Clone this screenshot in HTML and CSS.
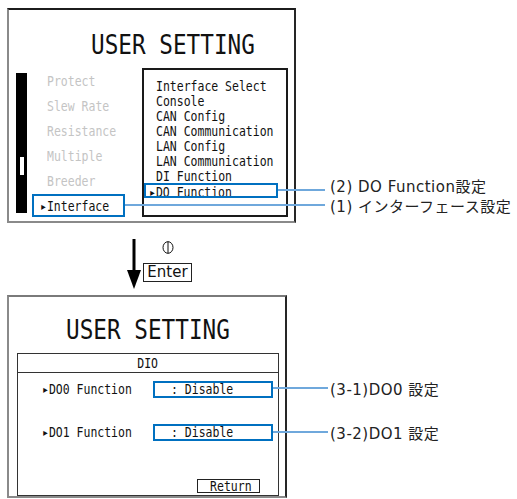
FILE: index.html
```html
<!DOCTYPE html>
<html lang="ja">
<head>
    <meta charset="UTF-8">
    <title>USER SETTING - DIO</title>
    <link rel="stylesheet" href="styles.css">
</head>
<body>
    <div class="sheet">
        <!-- step 1: interface menu -->
        <section class="screen screen-menu">
            <h1 class="title"><span class="big">USER SETTING</span></h1>
            <div class="menu-body">
                <div class="scrollbar"><div class="thumb"></div></div>
                <ul class="menu">
                    <li><span class="t">Protect</span></li>
                    <li><span class="t">Slew Rate</span></li>
                    <li><span class="t">Resistance</span></li>
                    <li><span class="t">Multiple</span></li>
                    <li><span class="t">Breeder</span></li>
                    <li class="sel"><span class="t mark">▸Interface</span></li>
                </ul>
                <ul class="submenu">
                    <li><span class="t">Interface Select</span></li>
                    <li><span class="t">Console</span></li>
                    <li><span class="t">CAN Config</span></li>
                    <li><span class="t">CAN Communication</span></li>
                    <li><span class="t">LAN Config</span></li>
                    <li><span class="t">LAN Communication</span></li>
                    <li><span class="t">DI Function</span></li>
                    <li class="sel"><span class="t mark">▸DO Function</span></li>
                </ul>
            </div>
        </section>

        <!-- step arrow -->
        <div class="step">
            <svg class="arrow" width="14" height="50" viewBox="0 0 14 50">
                <rect x="5.5" y="0" width="3" height="33" fill="#000"/>
                <polygon points="0,31 14,31 7,50" fill="#000"/>
            </svg>
            <div class="enter">
                <svg class="num" width="12" height="13" viewBox="0 0 12 13">
                    <ellipse cx="6" cy="6.5" rx="5" ry="5.8" fill="none" stroke="#111" stroke-width="1"/>
                    <line x1="6" y1="0.7" x2="6" y2="12.3" stroke="#111" stroke-width="1"/>
                </svg>
                <div class="key">Enter</div>
            </div>
        </div>

        <!-- step 2: DIO settings -->
        <section class="screen screen-dio">
            <h1 class="title"><span class="big">USER SETTING</span></h1>
            <div class="dio">
                <div class="dio-head"><span class="t center">DIO</span></div>
                <div class="dio-row first">
                    <div class="label"><span class="t">▸DO0 Function</span></div>
                    <div class="value"><span class="t">: Disable</span></div>
                </div>
                <div class="dio-row">
                    <div class="label"><span class="t">▸DO1 Function</span></div>
                    <div class="value"><span class="t">: Disable</span></div>
                </div>
                <div class="return"><span class="t right">Return</span></div>
            </div>
        </section>

        <!-- callouts -->
        <div class="callout c2"><div class="lead" style="width:47px"></div><span class="note up">(2) DO Function設定</span></div>
        <div class="callout c1"><div class="lead" style="width:200px"></div><span class="note">(1) インターフェース設定</span></div>
        <div class="callout c31"><div class="lead" style="width:55px"></div><span class="note">(3-1)DO0 設定</span></div>
        <div class="callout c32"><div class="lead" style="width:55px"></div><span class="note">(3-2)DO1 設定</span></div>
    </div>
</body>
</html>
```

FILE: styles.css
```css
body {
    margin: 0;
    background-color: #fff;
}
.sheet {
    position: relative;
    height: 499px;
    padding: 8px 0 0 7px;
    box-sizing: border-box;
    font-family: "DejaVu Sans Mono", monospace;
    color: #111;
    overflow: hidden;
}

/* narrow lcd text */
.t, .big {
    display: inline-block;
    white-space: pre;
    transform: scaleX(.82);
    transform-origin: 0 50%;
}
.big {
    transform: scaleX(.84);
}
.t.center {
    transform-origin: 50% 50%;
}
.t.right {
    transform-origin: 100% 50%;
}
.t.mark {
    margin-left: -7px;
}

.screen {
    border: 2px solid;
    border-color: #1c1c1c #262626 #8a8a8a #8a8a8a;
    box-sizing: border-box;
}
.screen-menu {
    width: 289px;
    height: 215px;
}
.screen-dio {
    width: 280px;
    height: 203px;
    border-top-color: #7a7a7a;
}
.title {
    margin: 20px 0 0;
    padding-left: 81.7px;
    font-size: 27px;
    line-height: 30px;
    font-weight: normal;
}
.screen-dio .title {
    margin-top: 18.3px;
    padding-left: 57px;
}

/* menu screen */
.menu-body {
    display: flex;
    align-items: flex-start;
}
.scrollbar {
    width: 11px;
    height: 140px;
    margin: 13px 0 0 7px;
    padding: 84px 0 0 4px;
    box-sizing: border-box;
    background-color: #000;
}
.thumb {
    width: 4px;
    height: 18px;
    background-color: #fff;
}
.menu {
    list-style: none;
    margin: 9px 0 0 5px;
    padding: 0;
    width: 93px;
    font-size: 14px;
    color: #c4c4c4;
}
.menu li {
    height: 25px;
    line-height: 25px;
    padding-left: 14.7px;
}
.menu .sel {
    position: relative;
    color: #111;
}
.menu .sel::after {
    content: "";
    position: absolute;
    left: 0;
    top: 0;
    width: 93px;
    height: 23px;
    border: 2px solid #0070c0;
    box-sizing: border-box;
}
.submenu {
    list-style: none;
    margin: 8px 0 0 17px;
    padding: 8.5px 0 0;
    width: 146px;
    height: 149px;
    box-sizing: border-box;
    border: 2px solid #1a1a1a;
    font-size: 14px;
}
.submenu li {
    height: 15px;
    line-height: 15px;
    padding-left: 12px;
}
.submenu .sel {
    position: relative;
    margin-top: 1.5px;
}
.submenu .sel::after {
    content: "";
    position: absolute;
    left: 0;
    top: -2px;
    width: 134px;
    height: 15px;
    border: 2px solid #0070c0;
    box-sizing: border-box;
}

/* arrow + enter key */
.step {
    display: flex;
    height: 72px;
    padding-left: 120px;
}
.arrow {
    margin-top: 16px;
}
.enter {
    display: flex;
    flex-direction: column;
    align-items: center;
    width: 49px;
    margin-left: 2px;
}
.num {
    margin-top: 18px;
}
.key {
    margin-top: 9px;
    width: 49px;
    height: 19px;
    border: 1px solid #222;
    box-sizing: border-box;
    font-family: "DejaVu Sans", sans-serif;
    font-size: 15px;
    line-height: 17px;
    text-align: center;
}

/* dio screen */
.dio {
    margin: 7.7px 0 0 8px;
    width: 262px;
    height: 143px;
    border: 1px solid #333;
    box-sizing: border-box;
    font-size: 14px;
}
.dio-head {
    height: 18px;
    line-height: 18px;
    border-bottom: 1px solid #333;
    text-align: center;
}
.dio-row {
    display: flex;
    align-items: center;
    margin-top: 26px;
    padding-left: 23.7px;
}
.dio-row.first {
    margin-top: 8px;
}
.label {
    width: 111.3px;
    line-height: 17px;
}
.value {
    width: 120px;
    height: 17px;
    padding-left: 16px;
    border: 2px solid #0070c0;
    box-sizing: border-box;
    line-height: 13px;
}
.return {
    width: 63px;
    height: 14px;
    margin: 38px 18px 0 auto;
    padding-right: 7px;
    border: 1px solid #222;
    box-sizing: border-box;
    line-height: 12px;
    text-align: right;
}

/* annotation leaders */
.callout {
    position: absolute;
    display: flex;
    align-items: center;
    height: 20px;
}
.c2 { left: 278px; top: 180px; }
.c1 { left: 125px; top: 195px; }
.c31 { left: 273px; top: 378px; }
.c32 { left: 273px; top: 422px; }
.lead {
    height: 2px;
    background-color: #6fa8dc;
}
.note {
    margin-left: 5px;
    font-family: "DejaVu Sans", "Noto Sans CJK JP", sans-serif;
    font-size: 15px;
    letter-spacing: .5px;
    color: #222;
    white-space: nowrap;
}
.c31 .note, .c32 .note {
    margin-left: 2px;
}
.note.up {
    margin-bottom: 10px;
}
```
